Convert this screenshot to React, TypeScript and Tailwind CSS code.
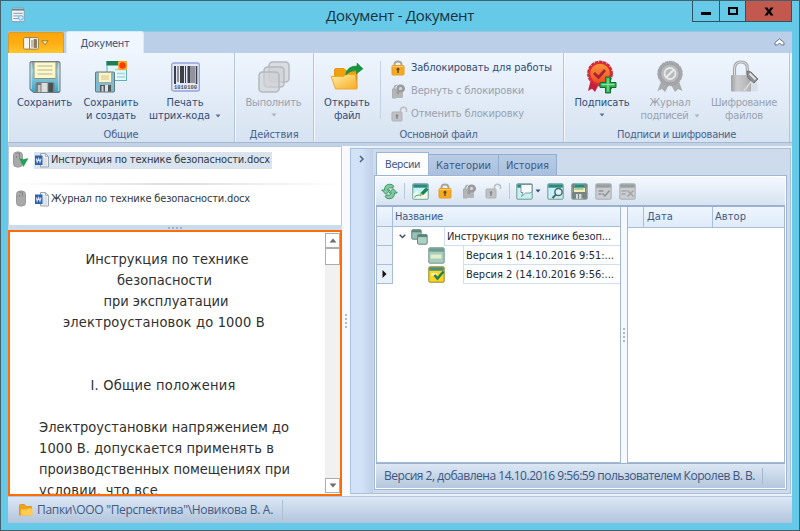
import React, { useLayoutEffect, useRef } from "react";

const UI = "font-['DejaVu_Sans_Condensed','DejaVu_Sans',sans-serif]";
const SEGOE = "font-['Open_Sans','Noto_Sans',sans-serif]";

/** One line of text whose tracking is spread to fill exactly `w` pixels. */
function Label({ w, children, className = "" }: { w: number; children: string; className?: string }) {
  const ref = useRef<HTMLSpanElement>(null);
  useLayoutEffect(() => {
    const el = ref.current!;
    el.style.letterSpacing = "0px";
    const natural = el.getBoundingClientRect().width;
    el.style.letterSpacing = `${(w - natural) / children.length}px`;
  }, [w, children]);
  return (
    <span ref={ref} className={`inline-block shrink-0 whitespace-nowrap ${className}`}>
      {children}
    </span>
  );
}

function Caret({ className = "opacity-75" }: { className?: string }) {
  return (
    <svg className={`shrink-0 ${className}`} width="6" height="4" viewBox="0 0 6 4">
      <path d="M0.5 0.5h5L3 3.4z" fill="currentColor" />
    </svg>
  );
}

/* ---------- large ribbon icons ---------- */

function SaveIcon() {
  return (
    <svg width="32" height="32" viewBox="0 0 32 32">
      <defs>
        <linearGradient id="fl" x1="0" y1="0" x2="0" y2="1">
          <stop offset="0" stopColor="#8a9aa2" />
          <stop offset=".3" stopColor="#a5d5e3" />
          <stop offset="1" stopColor="#35a3c6" />
        </linearGradient>
      </defs>
      <path d="M2.5.5h27q1.5 0 1.5 1.500v28q0 1.500-1.500 1.500h-25L1 28.500V2Q1 .5 2.500.5z" fill="url(#fl)" stroke="#6b7578" />
      <path d="M2.200 2v26M29.800 2v28" stroke="#c5e3ea" strokeWidth="1" />
      <path d="M5 1h22v15.500q0 1-1 1h-20q-1 0-1-1z" fill="#fdf8c8" stroke="#8c9084" />
      <path d="M8.500 5h15M8.500 9h15M8.500 13h15" stroke="#b5b29b" strokeWidth="1.200" />
      <path d="M7 31V22.500q0-1 1-1h16q1 0 1 1V31z" fill="#737a7b" stroke="#7b8588" />
      <path d="M12.500 22h6v9h-6z" fill="#dcdede" />
      <path d="M19.500 22h4.500v9h-4.500z" fill="#4c5152" />
      <path d="M9 24h2.500v7H9z" fill="#c2c7c7" />
    </svg>
  );
}

function SaveNewIcon() {
  return (
    <svg width="34" height="33" viewBox="0 0 34 33">
      <rect x="13" y="1.500" width="19.500" height="19" fill="#e2f7fa" stroke="#61afbd" />
      <rect x="12.500" y="1" width="15" height="4.500" fill="#1b8054" />
      <path d="M21 9.500h10M23 13.500h8M23 17h8" stroke="#a6d8d6" strokeWidth="1.300" />
      <rect x="1.500" y="12" width="19" height="20" rx="1" fill="#7cbdd2" stroke="#65767c" />
      <rect x="4.500" y="12.500" width="13" height="10" fill="#fbf5cb" stroke="#a0a591" strokeWidth=".8" />
      <rect x="7" y="15" width="8" height="5" fill="#e6dda9" />
      <rect x="6" y="25" width="11" height="6.500" fill="#535a5c" />
      <rect x="7.500" y="26" width="2" height="5.500" fill="#ccd0d0" />
      <rect x="11" y="25" width="3" height="6.500" fill="#e0e2e2" />
      <rect x="24" y="1" width="9" height="9" rx="2" fill="#ff9d25" />
      <path d="M24 1.500l4.500 1 4-1-.5 4 .7 4-4.200-.7-4.500.7.600-4z" fill="#ffb62f" />
      <circle cx="28.500" cy="5.500" r="3.200" fill="#f93a0c" />
    </svg>
  );
}

function BarcodeIcon() {
  return (
    <svg width="29" height="30" viewBox="0 0 29 30">
      <rect x=".7" y="1" width="27.600" height="28" rx="2" fill="#e3e8f8" stroke="#93a3dc" strokeWidth="1.300" />
      <g fill="#3e4144">
        <path d="M3 4h2v18H3zM6.500 4h1v16h-1zM9 4h4v17H9zM14 4h1v17h-1zM16.500 4h3v17h-3zM20.500 4h1v17h-1zM22.500 4h1v17h-1zM24.700 4h1.600v18h-1.600z" />
      </g>
      <text x="14.500" y="26.500" fontSize="6" textAnchor="middle" textLength="23" lengthAdjust="spacingAndGlyphs" fontFamily="Liberation Mono, monospace" fontWeight="bold" fill="#4d5054">1010100</text>
    </svg>
  );
}

function StackIcon() {
  return (
    <svg width="32" height="32" viewBox="0 0 32 32">
      <g fill="#cfd1d5" fillOpacity=".65" stroke="#b5b8bd" strokeWidth="1.500">
        <rect x="11" y="1" width="20" height="20" rx="3.500" />
        <rect x="6" y="6" width="20" height="20" rx="3.500" />
        <rect x="1" y="11" width="20" height="20" rx="3.500" />
      </g>
    </svg>
  );
}

function OpenIcon() {
  return (
    <svg width="34" height="30" viewBox="0 0 34 30">
      <defs>
        <linearGradient id="fo" x1="0" y1="0" x2="1" y2="1">
          <stop offset="0" stopColor="#fff0a8" />
          <stop offset="1" stopColor="#f8a91f" />
        </linearGradient>
      </defs>
      <path d="M4.500 21V8q0-1.500 1.500-1.500h8l2.500 2.500H27v17" fill="#efa20e" stroke="#e79516" />
      <path d="M27 10v16.500l-2-1z" fill="#bd8220" />
      <path d="M1.200 14.500h12.500l2-2h9.800L27 27H5.500z" fill="url(#fo)" stroke="#f0a734" strokeLinejoin="round" />
      <path d="M15.500 13Q17 3.800 27 4V1l6 5.800-6.500 5V8.500Q20.500 8 15.500 13z" fill="#16963e" stroke="#0b7a30" strokeWidth=".5" />
    </svg>
  );
}

function SignIcon() {
  return (
    <svg width="32" height="34" viewBox="0 0 32 34">
      <defs>
        <linearGradient id="sg" x1="0" y1="0" x2="0" y2="1">
          <stop offset="0" stopColor="#fb9a3c" />
          <stop offset="1" stopColor="#f0451c" />
        </linearGradient>
      </defs>
      <path d="M5 19L2 31l4-2.200L9 32l4-8zM19 22l3 9 4-2-2-10z" fill="#c4203e" />
      <circle cx="14" cy="13.500" r="11.600" fill="url(#sg)" stroke="#cd2939" strokeWidth="2.600" strokeDasharray="3.500 .6" />
      <circle cx="14" cy="13.500" r="10.500" fill="none" stroke="#d72e3a" strokeWidth="1.500" />
      <path d="M8 13l4.500 4.500 6.500-7.500" fill="none" stroke="#a2243a" strokeWidth="2.700" />
      <path d="M19.500 17h5v5.500H30v5h-5.500V33h-5v-5.500H14v-5h5.500z" fill="#30ae52" stroke="#0d6f32" />
      <path d="M22 18.500v13M15.500 24.500h13" stroke="#8de19a" strokeWidth="1.300" />
    </svg>
  );
}

function JournalIcon() {
  return (
    <svg width="28" height="34" viewBox="0 0 28 34">
      <path d="M6 19L1.500 31l4.500-2 3 3 5-9 5 9 3-3 4.500 2L22 19z" fill="#a9abad" />
      <circle cx="14" cy="13.500" r="12.200" fill="#a5a7aa" stroke="#a0a2a5" strokeDasharray="3 1" />
      <circle cx="14" cy="13.500" r="9.500" fill="#b7b9bb" stroke="#999b9e" strokeWidth="1" />
      <circle cx="14" cy="13.500" r="5.500" fill="none" stroke="#e7e8ea" strokeWidth="1.800" />
      <path d="M10.300 17.200l7.400-7.400" stroke="#e7e8ea" strokeWidth="2.200" />
    </svg>
  );
}

function EncryptIcon() {
  return (
    <svg width="30" height="34" viewBox="0 0 30 34">
      <defs>
        <linearGradient id="lk">
          <stop offset="0" stopColor="#9fa1a4" />
          <stop offset=".3" stopColor="#c9cbcd" />
          <stop offset=".7" stopColor="#bbbdc0" />
          <stop offset="1" stopColor="#a0a2a5" />
        </linearGradient>
      </defs>
      <path d="M5.500 16V9Q5.500 2 12 2t6.500 7v7" fill="none" stroke="#a6a8ab" strokeWidth="3.200" />
      <path d="M5.500 16V9Q5.500 2 12 2t6.500 7v7" fill="none" stroke="#dcdddf" strokeWidth="1" />
      <rect x="2" y="15" width="20" height="16.500" rx="1" fill="url(#lk)" />
      <path d="M13 32l6-9 9-1 1 9z" fill="#c7c9cb" opacity=".4" />
      <path d="M15 31l8-11 -3-4" fill="none" stroke="#d6d7d9" strokeWidth="1.500" />
      <path d="M18 11l4 1 7 7-4 4-6-5z" fill="#8c8e91" stroke="#737578" />
      <path d="M20.500 13.500l6 6" stroke="#e1e2e3" strokeWidth="2" />
    </svg>
  );
}

/* ---------- small icons ---------- */

function LockIcon() {
  return (
    <svg width="14" height="16" viewBox="0 0 14 16">
      <path d="M3.500 7V4.500Q3.500 1.500 7 1.500t3.500 3V7" fill="none" stroke="#aba598" strokeWidth="1.900" />
      <rect x="1" y="5.500" width="12" height="9.500" rx="1" fill="#f9a91d" stroke="#e69b2a" />
      <path d="M1.500 6.500h11" stroke="#ffcf66" />
      <circle cx="7" cy="9.200" r="1.400" fill="#5e4a24" />
      <path d="M6.300 9.500h1.400v3.500H6.300z" fill="#5e4a24" />
    </svg>
  );
}

function ReturnLockIcon() {
  return (
    <svg width="15" height="16" viewBox="0 0 15 16">
      <path d="M3 7V5Q3 2 6 2M1.500 6H5v9H1.500z" fill="#b4b6b8" stroke="#a9abad" />
      <rect x="1.500" y="8" width="10.500" height="7" rx="1" fill="#b4b6b8" />
      <path d="M5.500 10.500V5.500Q5.500 1.500 9.500 1.500T14 5.500Q14 9 10 9.500H8V12z" fill="#999b9e" />
      <path d="M8 7V5.500Q8 3.800 9.500 3.800t1.700 1.700Q11.200 7 9 7z" fill="#d5d7da" />
    </svg>
  );
}

function UnlockIcon() {
  return (
    <svg width="17" height="16" viewBox="0 0 17 16">
      <path d="M9.500 7V4Q9.500 1.300 12.500 1.300T15.500 4v2" fill="none" stroke="#bcbec2" strokeWidth="1.500" />
      <rect x="1" y="6" width="10" height="9" rx="1" fill="#bfc1c4" stroke="#afb1b5" />
      <circle cx="6" cy="9.500" r="1.300" fill="#858789" />
      <path d="M5.300 9.500h1.400V13H5.300z" fill="#858789" />
    </svg>
  );
}

function WordIcon() {
  return (
    <svg className="shrink-0" width="16" height="16" viewBox="0 0 16 16">
      <path d="M6.500 1.500h5L14.500 4.500v10.500h-8z" fill="#eef1f4" stroke="#9ca5ae" />
      <path d="M11.500 1.500v3h3" fill="none" stroke="#9ca5ae" strokeWidth=".8" />
      <path d="M9 7h4M9 9h4M9 11h4M9 13h4" fill="none" stroke="#c3c9cf" strokeWidth=".8" />
      <rect x="1" y="3.500" width="7.500" height="9.500" fill="#2e62ae" />
      <path d="M2.200 6.500l1 3.500 1.400-3.500L6 10l1.100-3.500" fill="none" stroke="#d3e2f7" strokeWidth="1.100" />
    </svg>
  );
}

function ClipIcon({ mark }: { mark?: boolean }) {
  return (
    <svg className="shrink-0" width="17" height="18" viewBox="0 0 17 18">
      <rect x={mark ? 1.500 : 4.500} y="1" width="9" height="15" rx="3.500" fill="#a9a9a9" stroke="#989898" />
      <path d={mark ? "M4.500 2.500q1.500-1 3 0v4M4.500 5v2" : "M7.500 2.500q1.500-1 3 0v4M7.500 5v2"} fill="none" stroke="#808080" strokeWidth=".9" />
      {mark && <path d="M7.500 7.500l3.500 1 5-1-4.500 8z" fill="#1fa356" stroke="#18894a" strokeWidth=".4" />}
    </svg>
  );
}

function WindowGlyph({ kind }: { kind: "edit" | "comment" | "search" | "save" | "check" | "remove" | "plain" | "current" }) {
  const gray = kind === "check" || kind === "remove";
  const current = kind === "current";
  const body = gray ? "#c9ccd0" : current ? "#ffd321" : kind === "plain" ? "#a8cdbd" : "#c5f1f4";
  const head = gray ? "#9b9ea1" : current ? "#4b8e7b" : kind === "plain" ? "#6f9c90" : "#2c8a7c";
  const edge = gray ? "#aaadb1" : current ? "#8a8a35" : "#719492";
  return (
    <svg className="shrink-0" width="17" height="17" viewBox="0 0 17 17">
      <rect x=".8" y=".8" width="15.400" height="15.400" rx="1" fill={body} stroke={edge} />
      <rect x="1.300" y="1.300" width="14.400" height="3.400" fill={head} />
      {kind === "edit" && (
        <g>
          <path d="M1.300 15.500V11l5-4v5l9-6v9.500z" fill="#eefbef" />
          <path d="M2 14.500q4-4 7-1.500" fill="none" stroke="#41a76b" />
          <path d="M8 12.500l1-3L14 4.500l2.500 2.300-5 5z" fill="#168450" />
          <path d="M8 12.500l3-.5-2-2z" fill="#f5b238" />
        </g>
      )}
      {kind === "comment" && (
        <path d="M5 1.500h11V9l-2 1H9.500l-4 3.500 1.500-4H5z" fill="#f6fafa" stroke="#718585" strokeWidth=".8" />
      )}
      {kind === "search" && (
        <g fill="none">
          <circle cx="11.500" cy="9" r="3.600" fill="#dbf6fb" stroke="#4d676e" strokeWidth="1.500" />
          <path d="M9 11.500L5.500 15" stroke="#4d676e" strokeWidth="2" />
        </g>
      )}
      {kind === "save" && (
        <g>
          <path d="M1.300 1.300h3v14.400h-3zM13 1.300h2.700v14.400H13z" fill="#7b8785" />
          <path d="M3 5h11v4H3z" fill="#f3efba" />
          <path d="M1.300 9h14.400v6.700H1.300z" fill="#7b8382" />
          <path d="M5 11h2v4.700H5zM8 11h2.500v4.700H8z" fill="#d5dad8" />
          <path d="M3.500 6h9" stroke="#72a984" />
        </g>
      )}
      {kind === "check" && <path d="M3.500 8h5M3.500 11h3M7.500 10.500l2.500 2.500 4.500-5.500" fill="none" stroke="#8f9295" strokeWidth="1.500" />}
      {kind === "remove" && <path d="M2.500 8h5M2.500 11h4M8.500 7.500l6 6M14.500 7.500l-6 6" fill="none" stroke="#a3a5a9" strokeWidth="1.700" />}
      {kind === "plain" && <rect x="2.500" y="7.500" width="11" height="4" fill="#e3eecb" />}
      {current && (
        <g fill="none">
          <path d="M3 8.500h6" stroke="#fff0a0" strokeWidth="3" />
          <path d="M6.500 9l3 3.500 6-7" stroke="#21804f" strokeWidth="2.500" />
        </g>
      )}
    </svg>
  );
}

function RefreshIcon() {
  return (
    <svg width="17" height="17" viewBox="0 0 17 17">
      <g fill="#7fcb9c" stroke="#348b5f" strokeWidth=".9" strokeLinejoin="round">
        <path d="M3.500 7Q3.500 1.500 8.500 1.200q3.500 0 4.500 2.300l-2 1.500Q8 3.500 6.500 7H9l-4 4.500L.7 7z" />
        <path d="M13.500 10Q13.500 15.500 8.500 15.800q-3.500 0-4.500-2.300l2-1.500q3 1.500 4.500-2H8l4-4.500L16.300 10z" />
      </g>
    </svg>
  );
}

function VersionsIcon() {
  return (
    <svg className="shrink-0" width="17" height="16" viewBox="0 0 17 16">
      <rect x=".7" y=".7" width="9.500" height="9.500" rx="1" fill="#9abfb4" stroke="#69877f" />
      <path d="M1 2.200h9" stroke="#5b857c" strokeWidth="2.200" />
      <rect x="6.500" y="5.500" width="9.700" height="9.700" rx="1" fill="#aed0c3" stroke="#69877f" />
      <path d="M7 7h9" stroke="#5b857c" strokeWidth="2.200" />
    </svg>
  );
}

/* ---------- ribbon parts ---------- */

function BigButton({ icon, lines, width, disabled, arrow }: {
  icon: React.ReactNode;
  lines: [string, number][];
  width: string;
  disabled?: boolean;
  arrow?: "below" | "inline";
}) {
  return (
    <div className={`flex shrink-0 flex-col items-center ${width} ${disabled ? "text-[#98a2b0]" : "text-[#304d78]"}`}>
      <div className="flex h-[43px] items-center justify-center pt-1">{icon}</div>
      {lines.map(([text, w], i) => (
        <div key={text} className="flex h-[13px] items-center gap-[5px] leading-[13px]">
          <Label w={w}>{text}</Label>
          {arrow === "inline" && i === lines.length - 1 && <Caret />}
        </div>
      ))}
      {arrow === "below" && <Caret className="mt-1 opacity-75" />}
    </div>
  );
}

function Group({ width, title, titleWidth, children }: { width: string; title: string; titleWidth: number; children: React.ReactNode }) {
  return (
    <section className={`flex h-full shrink-0 flex-col border-r border-[#b4c6dd] shadow-[inset_1px_0_0_#f4f8fd] ${width}`}>
      <div className="flex h-[74px]">{children}</div>
      <div className="flex h-[15px] items-center justify-center text-[#48628e]">
        <Label w={titleWidth}>{title}</Label>
      </div>
    </section>
  );
}

function SmallCommand({ icon, text, w, disabled }: { icon: React.ReactNode; text: string; w: number; disabled?: boolean }) {
  return (
    <div className={`flex h-[23px] items-center ${disabled ? "text-[#98a2b0]" : "text-[#304d78]"}`}>
      <div className="flex w-[20px] shrink-0">{icon}</div>
      <Label w={w}>{text}</Label>
    </div>
  );
}

function Ribbon() {
  return (
    <div className="flex h-[90px] shrink-0 border-b border-[#a5b8d2] bg-linear-to-b from-[#eef5fe] to-[#d7e3f1]">
      <Group width="w-[227px]" title="Общие" titleWidth={35}>
        <BigButton width="w-[73px]" icon={<SaveIcon />} lines={[["Сохранить", 55]]} />
        <BigButton width="w-[60px]" icon={<SaveNewIcon />} lines={[["Сохранить", 55], ["и создать", 50]]} />
        <BigButton width="w-[88px]" icon={<BarcodeIcon />} lines={[["Печать", 37], ["штрих-кода", 61]]} arrow="inline" />
      </Group>
      <Group width="w-[79px]" title="Действия" titleWidth={49}>
        <BigButton width="w-[77px]" icon={<StackIcon />} lines={[["Выполнить", 56]]} arrow="below" disabled />
      </Group>
      <Group width="w-[250px]" title="Основной файл" titleWidth={78}>
        <BigButton width="w-[66px]" icon={<OpenIcon />} lines={[["Открыть", 46], ["файл", 26]]} />
        <div className="mt-2 h-[58px] w-px bg-[#c4d2e4]" />
        <div className="flex flex-col pl-[10px] pt-[3px]">
          <SmallCommand icon={<LockIcon />} text="Заблокировать для работы" w={141} />
          <SmallCommand icon={<ReturnLockIcon />} text="Вернуть с блокировки" w={113} disabled />
          <SmallCommand icon={<UnlockIcon />} text="Отменить блокировку" w={113} disabled />
        </div>
      </Group>
      <Group width="w-[226px]" title="Подписи и шифрование" titleWidth={119}>
        <BigButton width="w-[76px]" icon={<SignIcon />} lines={[["Подписать", 55]]} arrow="below" />
        <BigButton width="w-[60px]" icon={<JournalIcon />} lines={[["Журнал", 41], ["подписей", 48]]} arrow="inline" disabled />
        <BigButton width="w-[88px]" icon={<EncryptIcon />} lines={[["Шифрование", 66], ["файлов", 38]]} disabled />
      </Group>
    </div>
  );
}

function TabStrip() {
  return (
    <div className="flex h-[22px] shrink-0 items-end border-t border-[#9cc3df] bg-[#bccfe8] pr-[7px]">
      <button className="flex h-[21px] w-[56px] items-center justify-center gap-[2px] rounded-t-[2px] border border-b-0 border-[#d89c2c] bg-linear-to-b from-[#fba50c] via-[#ffae13] to-[#ffc62a]">
        <svg width="16" height="13" viewBox="0 0 16 13">
          <rect x=".6" y=".6" width="14.800" height="11.500" rx="1" fill="#f8f4ea" stroke="#92805e" />
          <path d="M6.500 1v11" stroke="#92805e" />
          <path d="M9 3v7.500M11 2.500h2.500v8H11z" stroke="#8d7e60" fill="#857a65" />
        </svg>
        <svg width="8" height="6" viewBox="0 0 8 6">
          <path d="M.8.8h6.400L4 4.800z" fill="#fff0b8" stroke="#9c7a36" />
        </svg>
      </button>
      <div className="ml-[2px] flex h-[22px] w-[78px] items-center justify-center rounded-t-[3px] border border-b-0 border-[#dce8f6] bg-[#f0f6fe] pt-[2px] text-[#38547f]">
        <Label w={49}>Документ</Label>
      </div>
      <div className="flex-1" />
      <svg className="mb-[7px]" width="11" height="8" viewBox="0 0 11 8">
        <path d="M1 4.500L5.500.8 10 4.500V7H7.500l-2-2-2 2H1z" fill="#f7fafd" stroke="#6d7681" />
      </svg>
    </div>
  );
}

function TitleBar() {
  return (
    <header className="flex h-[30px] shrink-0 items-start">
      <svg className="ml-[3px] mt-[6px]" width="14" height="16" viewBox="0 0 15 16">
        <rect x=".6" y=".6" width="13.600" height="14.500" rx="1.500" fill="#edf4f7" stroke="#829ca8" />
        <path d="M1 2.300h13" stroke="#6d8795" strokeWidth="2" />
        <path d="M2.500 6.200h10M2.500 9h6M2.500 11.800h5" stroke="#82939c" />
        <circle cx="10.500" cy="11" r="2.500" fill="#c9ecff" stroke="#62a8e5" />
      </svg>
      <div className={`ml-[301px] mt-[2px] h-6 text-[15px] leading-6 text-[#17323d] ${SEGOE}`}>
        <Label w={148}>Документ - Документ</Label>
      </div>
      <div className="flex-1" />
      <div className="flex h-[21px] border border-t-0 border-[#31535f]">
        <div className="flex w-[27px] items-center justify-center border-r border-[#31535f]">
          <div className="mt-1 h-[3px] w-[10px] bg-black" />
        </div>
        <div className="flex w-[26px] items-center justify-center border-r border-[#31535f]">
          <div className="h-2 w-[10px] border-2 border-black" />
        </div>
        <div className="flex w-[45px] items-center justify-center bg-[#c3584e]">
          <svg width="10" height="9" viewBox="0 0 10 9">
            <path d="M.5.500h3L5 3 6.500.500h3L6.600 4.500l2.900 4h-3L5 6 3.500 8.500h-3L3.400 4.500z" fill="#000" />
          </svg>
        </div>
      </div>
    </header>
  );
}

/* ---------- left column ---------- */

function FileRow({ name, w, selected, mark }: { name: string; w: number; selected?: boolean; mark?: boolean }) {
  return (
    <div className="flex items-center">
      <ClipIcon mark={mark} />
      <div className={`ml-[5px] flex h-[17px] items-center gap-px pr-[2px] ${selected ? "bg-[#dae4ef]" : ""}`}>
        <WordIcon />
        <Label w={w}>{name}</Label>
      </div>
    </div>
  );
}

const heading: [string, number, string][] = [
  ["Инструкция по технике", 163, "pl-0"],
  ["безопасности", 95, "pr-[5px]"],
  ["при эксплуатации", 125, "pr-[2px]"],
  ["электроустановок до 1000 В", 202, "pr-[6px]"],
];

const paragraph: [string, number][] = [
  ["Электроустановки напряжением до", 250],
  ["1000 В. допускается применять в", 235],
  ["производственных помещениях при", 251],
  ["условии, что все", 119],
];

function ScrollButton({ up }: { up?: boolean }) {
  return (
    <div className="flex h-[15px] shrink-0 items-center justify-center border border-[#adadad] bg-white">
      <svg width="8" height="5" viewBox="0 0 8 5">
        <path d={up ? "M.5 4.500h7L4 .5z" : "M.5.500h7L4 4.500z"} fill="#6d6d6d" />
      </svg>
    </div>
  );
}

function DocumentPreview() {
  return (
    <div className="flex h-[266px] border-2 border-[#ff6d05] bg-white text-[14.500px] leading-[21px] text-[#303030]">
      <div className="h-full flex-1 overflow-hidden pl-[29px] pt-[17px]">
        <div className="flex w-[256px] flex-col items-center">
          {heading.map(([t, w, pad]) => (
            <div key={t} className={`h-[21px] ${pad}`}>
              <Label w={w}>{t}</Label>
            </div>
          ))}
          <div className="mt-[42px] h-[21px] pr-2">
            <Label w={145}>I. Общие положения</Label>
          </div>
        </div>
        <div className="mt-[21px]">
          {paragraph.map(([t, w]) => (
            <div key={t} className="h-[21px]">
              <Label w={w}>{t}</Label>
            </div>
          ))}
        </div>
      </div>
      <div className="my-[1px] flex w-[15px] flex-col bg-[#f1f1f1]">
        <ScrollButton up />
        <div className="h-[17px] border border-[#adadad] bg-white" />
        <div className="flex-1" />
        <ScrollButton />
      </div>
    </div>
  );
}

function LeftColumn() {
  return (
    <div className="flex w-[334px] shrink-0 flex-col">
      <div className="flex h-[79px] flex-col border border-b-0 border-[#b9cae0] bg-white pl-[3px] pt-[4px] text-[#2f3845]">
        <FileRow name="Инструкция по технике безопасности.docx" w={219} selected mark />
        <div className="mb-[5px] mt-[14px] h-[2px] bg-linear-to-r from-white via-[#dedede] to-white" />
        <FileRow name="Журнал по технике безопасности.docx" w={199} />
      </div>
      <div className="flex h-[5px] items-center justify-center gap-[2px] bg-[#cddcec]">
        {[0, 1, 2, 3].map((i) => (
          <div key={i} className="size-[2px] bg-[#98afcf]" />
        ))}
      </div>
      <DocumentPreview />
    </div>
  );
}

/* ---------- right panel ---------- */

function Toolbar() {
  return (
    <div className="flex h-[30px] shrink-0 items-center border-b-2 border-[#9bb1cf] bg-linear-to-b from-[#f3f8fe] to-[#d7e3f1] pl-[5px]">
      <RefreshIcon />
      <div className="ml-[6px] h-4 w-px bg-[#b7c7dc]" />
      <div className="ml-[7px] flex items-center">
        <div className="w-[26px]"><WindowGlyph kind="edit" /></div>
        <div className="w-[24px]"><LockIcon /></div>
        <div className="w-[23px]"><ReturnLockIcon /></div>
        <UnlockIcon />
      </div>
      <div className="ml-[7px] h-4 w-px bg-[#b7c7dc]" />
      <div className="ml-[6px] flex items-center">
        <WindowGlyph kind="comment" />
        <Caret className="ml-[2px] text-[#31517f]" />
        <div className="ml-[6px] flex gap-[7px]">
          <WindowGlyph kind="search" />
          <WindowGlyph kind="save" />
          <WindowGlyph kind="check" />
          <WindowGlyph kind="remove" />
        </div>
      </div>
    </div>
  );
}

function VersionRow({ children, current }: { children: React.ReactNode; current?: boolean }) {
  return (
    <div className="flex h-[19px]">
      <div className="flex w-4 shrink-0 items-center justify-center border-b border-r border-[#a9bdd9] bg-[#e8f0fa]">
        {current && (
          <svg width="5" height="8" viewBox="0 0 5 8">
            <path d="M.5 0L4.500 4l-4 4z" fill="#111" />
          </svg>
        )}
      </div>
      {children}
    </div>
  );
}

function Cell({ w, children }: { w: number; children: string }) {
  return (
    <div className="flex flex-1 items-center border-b border-l border-[#cfdef1] pl-[2px] pt-[2px] text-[#202a38]">
      <Label w={w}>{children}</Label>
    </div>
  );
}

function VersionTree() {
  return (
    <div className="flex w-[245px] shrink-0 flex-col border-x border-b border-[#a4b8d4] bg-white">
      <div className="flex h-[20px] border-b border-[#a9bdd9] bg-linear-to-b from-[#eef5fe] to-[#dfebf9]">
        <div className="w-4 shrink-0 border-r border-[#a9bdd9]" />
        <div className="flex items-center pl-[2px] text-[#3e5b87]">
          <Label w={48}>Название</Label>
        </div>
      </div>
      <VersionRow>
        <div className="flex w-[51px] items-center pl-[6px]">
          <svg width="7" height="5" viewBox="0 0 7 5">
            <path d="M.7.700L3.500 3.500 6.300.700" fill="none" stroke="#42516b" strokeWidth="1.500" />
          </svg>
          <div className="ml-[5px]"><VersionsIcon /></div>
        </div>
        <Cell w={164}>Инструкция по технике безоп...</Cell>
      </VersionRow>
      <VersionRow>
        <div className="flex w-[70px] items-center pl-[35px]"><WindowGlyph kind="plain" /></div>
        <Cell w={148}>Версия 1 (14.10.2016 9:51:...</Cell>
      </VersionRow>
      <VersionRow current>
        <div className="flex w-[70px] items-center pl-[35px]"><WindowGlyph kind="current" /></div>
        <Cell w={148}>Версия 2 (14.10.2016 9:56:...</Cell>
      </VersionRow>
    </div>
  );
}

function DetailsGrid() {
  return (
    <div className="flex flex-1 flex-col border-x border-b border-[#a4b8d4] bg-white text-[#3e5b87]">
      <div className="flex h-[21px] items-center border-b border-[#a9bdd9] bg-linear-to-b from-[#eef5fe] to-[#dfebf9]">
        <div className="h-full w-4 border-r border-[#a9bdd9]" />
        <div className="flex h-full w-[69px] items-center border-r border-[#a9bdd9] pl-[3px]">
          <Label w={26}>Дата</Label>
        </div>
        <div className="pl-[2px]">
          <Label w={31}>Автор</Label>
        </div>
      </div>
    </div>
  );
}

function VersionsPanel() {
  return (
    <div className="flex h-[346px] flex-1 border border-[#abc0da] bg-[#cedbec]">
      <div className="flex w-[22px] shrink-0 justify-center bg-linear-to-r from-[#d2e2f7] via-[#d2e2f7] to-[#bfd0e7] pt-[6px]">
        <svg width="6" height="8" viewBox="0 0 6 8">
          <path d="M1 1l3 3-3 3" fill="none" stroke="#4b6489" strokeWidth="1.500" />
        </svg>
      </div>
      <div className="flex flex-1 flex-col pr-[3px] pb-[3px] pl-px">
        <div className="flex h-[26px] shrink-0 items-end pl-[2px] text-[#3f5a85]">
          <div className="flex h-[23px] w-[53px] items-center justify-center border border-b-0 border-[#9fb5d3] bg-[#fcfdff] pt-px">
            <Label w={35}>Версии</Label>
          </div>
          <div className="flex h-[21px] w-[70px] items-center justify-center border border-b-0 border-l-0 border-[#94accd] bg-linear-to-b from-[#b9cce5] to-[#a9c0de] pt-px">
            <Label w={55}>Категории</Label>
          </div>
          <div className="flex h-[21px] w-[58px] items-center justify-center border border-b-0 border-l-0 border-[#94accd] bg-linear-to-b from-[#b9cce5] to-[#a9c0de] pt-px">
            <Label w={43}>История</Label>
          </div>
        </div>
        <div className="flex flex-1 flex-col border border-[#9fb5d3] bg-white p-px">
          <Toolbar />
          <div className="flex flex-1">
            <VersionTree />
            <div className="flex w-[6px] flex-col items-center justify-center gap-[2px] bg-[#f5f8fd]">
              {[0, 1, 2, 3].map((i) => (
                <div key={i} className="size-[2px] bg-[#a9bad3]" />
              ))}
            </div>
            <DetailsGrid />
          </div>
          <div className={`flex h-[25px] shrink-0 items-center border-t border-[#9bb1cf] bg-linear-to-b from-[#dce7f4] to-[#b4c7dd] pl-[8px] text-[12px] text-[#3b567f] ${SEGOE}`}>
            <Label w={371}>Версия 2, добавлена 14.10.2016 9:56:59 пользователем Королев В. В.</Label>
            <div className="ml-[7px] h-4 w-px bg-[#a3b7d1]" />
          </div>
        </div>
      </div>
    </div>
  );
}

export default function App() {
  return (
    <div className={`flex h-[531px] w-[800px] flex-col overflow-hidden border border-[#42616d] bg-[#66c9e8] px-[7px] text-[11px] leading-[14px] ${UI}`}>
      <TitleBar />
      <TabStrip />
      <Ribbon />
      <main className="flex h-[353px] shrink-0 bg-[#e9f0f8] shadow-[inset_0_3px_0_#c1d1e6]">
        <div className="flex pt-[3px]">
          <LeftColumn />
        </div>
        <div className="mt-[3px] flex w-2 shrink-0 flex-col items-center justify-center gap-[2px] bg-[#f8faff]">
          {[0, 1, 2, 3].map((i) => (
            <div key={i} className="size-[2px] bg-[#a9bad3]" />
          ))}
        </div>
        <div className="flex flex-1 pr-px pt-[5px]">
          <VersionsPanel />
        </div>
      </main>
      <footer className={`flex h-[27px] shrink-0 items-center border-t border-[#b3c6dd] bg-linear-to-b from-[#dce7f5] to-[#b2c5dc] pl-[11px] text-[12px] text-[#3f5a84] ${SEGOE}`}>
        <svg className="shrink-0" width="14" height="12" viewBox="0 0 14 12">
          <path d="M.5 11V1.500Q.5.500 1.500.500h4l1.500 2h5.500v8.500z" fill="#f3a31a" stroke="#e8951f" />
          <path d="M2 11V5.500h6l1-1h4.500V11.500H1.500z" fill="#ffcc52" />
        </svg>
        <div className="ml-[4px] flex">
          <Label w={236}>Папки\ООО "Перспектива"\Новикова В. А.</Label>
        </div>
        <div className="ml-[9px] h-5 w-px bg-[#aec0d8]" />
      </footer>
    </div>
  );
}
